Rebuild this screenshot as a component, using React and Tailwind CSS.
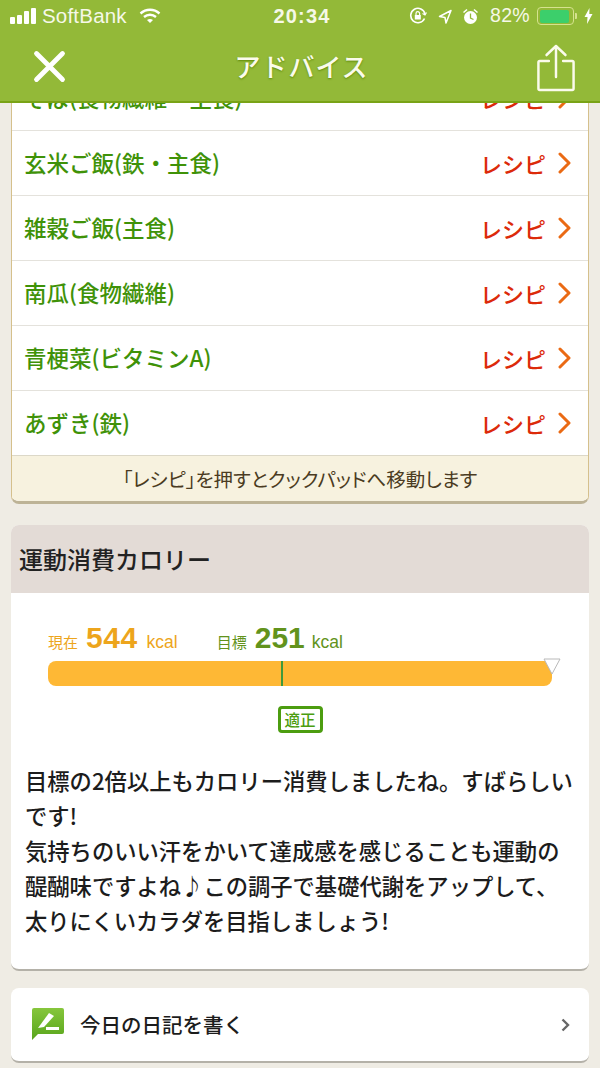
import React from 'react';

const foods = ['そば(食物繊維・主食)', '玄米ご飯(鉄・主食)', '雑穀ご飯(主食)', '南瓜(食物繊維)', '青梗菜(ビタミンA)', 'あずき(鉄)'];

const font = "font-['Noto_Sans_CJK_JP','Liberation_Sans',sans-serif]";

const StatusBar = () => (
  <div className="h-[32px] pl-[10px] flex items-center whitespace-nowrap text-[#f6f8e8] font-['Liberation_Sans',sans-serif]">
    <div className="flex-none w-[26px] flex items-end gap-[2px] h-[16px]">
      <span className="w-[5px] h-[7px] bg-white rounded-[1px]" />
      <span className="w-[5px] h-[9px] bg-white rounded-[1px]" />
      <span className="w-[5px] h-[13px] bg-white rounded-[1px]" />
      <span className="w-[5px] h-[16px] bg-white rounded-[1px]" />
    </div>
    <span className="ml-[6px] w-[85px] flex-none text-[20.5px] tracking-[0.2px]">SoftBank</span>
    <svg className="ml-[12px] flex-none" width="22" height="16" viewBox="0 0 22 16" fill="none" stroke="#fff" strokeWidth="2.400">
      <path d="M1.500 5.500C7 0.500 15 0.500 20.500 5.500" />
      <path d="M5 9c3.500-3 8.500-3 12 0" />
      <path d="M11 15l-3-3c2-1.300 4-1.300 6 0z" fill="#fff" stroke="none" />
    </svg>
    <span className="ml-[111px] w-[60px] flex-none text-center text-[20px] font-bold tracking-[1.200px]">20:34</span>
    <svg className="ml-[77px] flex-none" width="18" height="18" viewBox="0 0 18 18" fill="none" stroke="#fff" strokeWidth="1.600">
      <path d="M15.500 11.500A7.200 7.200 0 1 1 16 7" />
      <path d="M13.500 6.500l2.500 1.500 1.500-2.500" strokeWidth="1.200" />
      <rect x="5.800" y="8" width="6" height="4.500" fill="#fff" stroke="none" />
      <path d="M7 8V6.500a1.800 1.800 0 0 1 3.600 0V8" strokeWidth="1.200" />
    </svg>
    <svg className="ml-[11px] flex-none" width="14" height="15" viewBox="0 0 14 15" fill="none" stroke="#fff" strokeWidth="1.500">
      <path d="M13 1.500L1.500 7.500l5.500 1 1 5.500z" strokeLinejoin="round" />
    </svg>
    <svg className="ml-[10px] flex-none" width="17" height="17" viewBox="0 0 16 17" fill="#fff">
      <circle cx="8" cy="9.500" r="6.500" />
      <path d="M8 5.500v4.500l3 1.500" stroke="#93b938" strokeWidth="1.300" fill="none" />
      <path d="M0.500 4l3.500-3 1 1-3.500 3zM15.500 4l-3.500-3-1 1 3.500 3z" />
    </svg>
    <span className="ml-[11px] w-[41px] flex-none text-[19.500px] tracking-[0.3px]">82%</span>
    <div className="ml-[6px] flex-none w-[37px] h-[18px] rounded-[4px] border border-[#d6e28f] p-[1.500px]">
      <div className="w-[29px] h-full rounded-[2px] bg-[#3ccf6b]" />
    </div>
    <span className="ml-[1px] flex-none w-[2px] h-[6px] bg-[#d6e28f] rounded-r-[1px]" />
    <svg className="ml-[7px] flex-none" width="9" height="16" viewBox="0 0 9 16" fill="#fff">
      <path d="M5.500 0L0.500 9h3L3 16l5.500-10h-3.200z" />
    </svg>
  </div>
);

const Header = () => (
  <header className="relative z-10 h-[103px] bg-[#93b938] border-b-2 border-[#79a316]">
    <StatusBar />
    <div className="h-[69px] pl-[33px] pr-[25px] flex items-center justify-between">
      <svg width="33" height="33" viewBox="0 0 33 33" stroke="#fff" strokeWidth="4.800" strokeLinecap="round">
        <path d="M3.500 3.500l26 26M29.500 3.500l-26 26" />
      </svg>
      <h1 className={`${font} -mt-[2px] text-[26px] font-medium text-[#fbfbec] tracking-[1px] [text-shadow:0_1px_2px_#5e8a08]`}>アドバイス</h1>
      <svg className="mt-[2px]" width="38" height="48" viewBox="0 0 40 48" preserveAspectRatio="none" fill="none" stroke="#fbfbec" strokeWidth="2.600" strokeLinecap="round" strokeLinejoin="round">
        <path d="M12.500 17H3a1.500 1.500 0 0 0-1.500 1.500v26A1.500 1.500 0 0 0 3 46h34a1.500 1.500 0 0 0 1.500-1.500v-26A1.500 1.500 0 0 0 37 17h-9.500" />
        <path d="M20 33V2M10 11l10-9 10 9" />
      </svg>
    </div>
  </header>
);

const FoodRow = ({ name }) => (
  <div className="h-[65px] pl-[12px] pr-[13px] flex items-center justify-between border-b border-[#e4e2dc]">
    <span className={`${font} text-[22.500px] font-medium text-[#3f9208]`}>{name}</span>
    <span className="flex items-center">
      <span className={`${font} text-[22px] font-medium text-[#dc2a0a]`}>レシピ</span>
      <svg className="ml-[12px] mr-[4px]" width="13" height="22" viewBox="0 0 13 22" fill="none" stroke="#ea6a14" strokeWidth="3" strokeLinecap="round" strokeLinejoin="round">
        <path d="M2 2l9 9-9 9" />
      </svg>
    </span>
  </div>
);

const RecipeCard = () => (
  <section className="mx-[11px] -mt-[37px] rounded-b-[8px] bg-white border-x border-b-[3px] border-[#d5c08c] border-b-[#bdb396] overflow-hidden">
    {foods.map((f) => (
      <FoodRow key={f} name={f} />
    ))}
    <p className={`${font} h-[46px] flex items-center justify-center bg-[#f7f2df] border-t border-[#dcd8c8] text-[19.500px] text-[#4a3b22] -mt-[1px] [font-feature-settings:'palt']`}>
      「レシピ」を押すとクックパッドへ移動します
    </p>
  </section>
);

const CalorieCard = () => (
  <section className="mx-[11px] mt-[21px] h-[446px] rounded-[8px] bg-white border-b-2 border-[#b4b1a8] overflow-hidden">
    <h2 className={`${font} h-[68px] pl-[8px] flex items-center bg-[#e3dbd6] text-[24px] font-medium text-[#222]`}>運動消費カロリー</h2>
    <div className="h-[68px] pt-[30px] pl-[37px] flex items-baseline leading-none font-['Liberation_Sans',sans-serif]">
      <span className={`${font} text-[15px] text-[#eda51c]`}>現在</span>
      <span className="ml-[8px] text-[30px] font-bold text-[#eda51c] tracking-[0.5px]">544</span>
      <span className="ml-[9px] text-[17.500px] text-[#eda51c]">kcal</span>
      <span className={`${font} ml-[39px] text-[15px] text-[#62931c]`}>目標</span>
      <span className="ml-[8px] text-[30px] font-bold text-[#62931c]">251</span>
      <span className="ml-[7px] text-[17.500px] text-[#62931c]">kcal</span>
    </div>
    <div className="relative ml-[37px] w-[504px] h-[25px] rounded-[8px] bg-[#feb835]">
      <span className="absolute left-[233px] top-0 w-[2px] h-full bg-[#3f9a3c]" />
      <svg className="absolute -right-[9px] -top-[3px]" width="18" height="17" viewBox="0 0 18 17" fill="#fff" stroke="#b9b9b9" strokeWidth="1">
        <path d="M1 1h16L9 16z" />
      </svg>
    </div>
    <div className="mt-[20px] flex justify-center">
      <span className={`${font} w-[45px] h-[27px] flex items-center justify-center rounded-[4px] border-[3px] border-[#4c9d10] text-[15.500px] font-medium text-[#4c9d10]`}>適正</span>
    </div>
    <p className={`${font} mt-[30px] pl-[14px] pr-[11px] text-[22.300px] font-medium leading-[35px] text-[#1c1c1c]`}>
      目標の2倍以上もカロリー消費しましたね。すばらしいです!<br />
      気持ちのいい汗をかいて達成感を感じることも運動の醍醐味ですよね♪この調子で基礎代謝をアップして、<br />
      太りにくいカラダを目指しましょう!
    </p>
  </section>
);

const DiaryLink = () => (
  <section className="mx-[11px] mt-[17px] h-[75px] rounded-[8px] bg-white border-b-2 border-[#b4b1a8] pl-[21px] pr-[19px] flex items-center">
    <svg width="32" height="32" viewBox="0 0 32 32" className="-mt-[1px]">
      <defs>
        <linearGradient id="diary" x1="0" y1="0" x2="0" y2="1">
          <stop offset="0" stopColor="#86c63c" />
          <stop offset="1" stopColor="#58a51c" />
        </linearGradient>
      </defs>
      <path d="M2 0h28a2 2 0 0 1 2 2v22a2 2 0 0 1-2 2H6l-6 6V2a2 2 0 0 1 2-2z" fill="url(#diary)" />
      <path d="M6 20L17 5l5 3-10 11z" fill="#fff" />
      <path d="M14 19h13v3H14z" fill="#fff" />
    </svg>
    <span className={`${font} ml-[16px] flex-1 text-[20.500px] font-medium text-[#1c1c1c]`}>今日の日記を書く</span>
    <svg width="9" height="14" viewBox="0 0 9 14" fill="none" stroke="#666" strokeWidth="2.400">
      <path d="M1.500 1.500L7 7l-5.500 5.500" />
    </svg>
  </section>
);

const App = () => (
  <div className="w-[600px] h-[1068px] overflow-hidden bg-[#efece4]">
    <Header />
    <RecipeCard />
    <CalorieCard />
    <DiaryLink />
  </div>
);

export default App;
